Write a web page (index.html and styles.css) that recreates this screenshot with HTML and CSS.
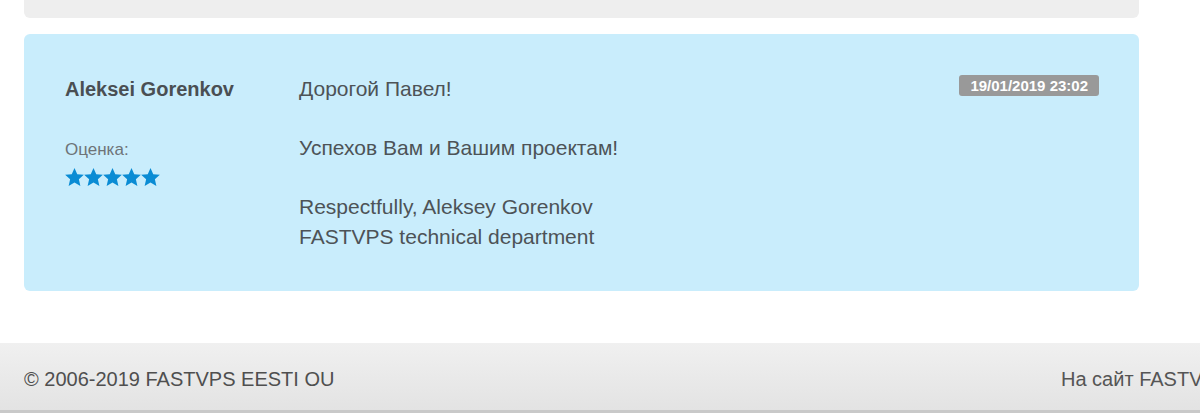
FILE: index.html
```html
<!DOCTYPE html>
<html lang="ru">
<head>
<meta charset="utf-8">
<title>Ticket</title>
<link rel="stylesheet" href="styles.css">
</head>
<body>
<div class="page">
  <div class="card card-prev"></div>
  <div class="card card-reply">
    <div class="author">
      <div class="author-name">Aleksei Gorenkov</div>
      <div class="rating-label">Оценка:</div>
      <div class="stars">
        <svg viewBox="1.4 1.4 21.2 20.2" class="star"><path d="M12 1.5l3.1 6.9 7.4.7-5.6 5 1.7 7.4L12 17.7l-6.6 3.8 1.7-7.4-5.6-5 7.4-.7z"/></svg>
        <svg viewBox="1.4 1.4 21.2 20.2" class="star"><path d="M12 1.5l3.1 6.9 7.4.7-5.6 5 1.7 7.4L12 17.7l-6.6 3.8 1.7-7.4-5.6-5 7.4-.7z"/></svg>
        <svg viewBox="1.4 1.4 21.2 20.2" class="star"><path d="M12 1.5l3.1 6.9 7.4.7-5.6 5 1.7 7.4L12 17.7l-6.6 3.8 1.7-7.4-5.6-5 7.4-.7z"/></svg>
        <svg viewBox="1.4 1.4 21.2 20.2" class="star"><path d="M12 1.5l3.1 6.9 7.4.7-5.6 5 1.7 7.4L12 17.7l-6.6 3.8 1.7-7.4-5.6-5 7.4-.7z"/></svg>
        <svg viewBox="1.4 1.4 21.2 20.2" class="star"><path d="M12 1.5l3.1 6.9 7.4.7-5.6 5 1.7 7.4L12 17.7l-6.6 3.8 1.7-7.4-5.6-5 7.4-.7z"/></svg>
      </div>
    </div>
    <div class="message">
      <p>Дорогой Павел!</p>
      <p>Успехов Вам и Вашим проектам!</p>
      <p class="sign">Respectfully, Aleksey Gorenkov<br>FASTVPS technical department</p>
    </div>
    <div class="meta">
      <span class="date">19/01/2019 23:02</span>
    </div>
  </div>
</div>
<footer class="footer">
  <div class="copy">© 2006-2019 FASTVPS EESTI OU</div>
  <a class="site-link" href="#">На сайт FASTVPS</a>
</footer>
</body>
</html>
```

FILE: styles.css
```css
html, body {
  margin: 0;
  padding: 0;
  background: #fff;
  overflow: hidden;
}
body {
  font-family: "Liberation Sans", Arial, sans-serif;
  color: #4d5357;
  width: 1200px;
  height: 415px;
}
.page {
  padding: 0 61px 0 24px;
  display: flex;
  flex-direction: column;
  gap: 16px;
  height: 343px;
}
.card {
  border-radius: 0 0 6px 6px;
}
.card-prev {
  height: 18px;
  background: #eeeeee;
}
.card-reply {
  border-radius: 6px;
  background: #c9edfc;
  display: flex;
  padding: 40px 40px 39px 41px;
}
.author {
  width: 234px;
  flex: none;
}
.author-name {
  font-weight: bold;
  font-size: 20px;
  line-height: 30px;
  color: #4a4f53;
}
.rating-label {
  margin-top: 36px;
  font-size: 17px;
  line-height: 20px;
  color: #6e7478;
}
.stars {
  display: flex;
  margin-top: 8px;
}
.star {
  width: 19px;
  height: 18px;
  fill: #0a8cd4;
}
.message {
  flex: 1;
  font-size: 21px;
  line-height: 30px;
}
.message p {
  margin: 0 0 29px;
}
.message p.sign {
  margin: 0;
}
.meta {
  flex: none;
  padding-top: 1px;
}
.date {
  display: inline-block;
  background: #999999;
  color: #fff;
  font-weight: bold;
  font-size: 15px;
  line-height: 21px;
  padding: 0 11px;
  border-radius: 3px;
}
.footer {
  width: 1260px;
  height: 62px;
  background: linear-gradient(#f0f0f0, #e3e3e3);
  border-bottom: 3px solid #c9c9c9;
  display: flex;
  justify-content: space-between;
  align-items: center;
  padding: 5px 0 0 24px;
  font-size: 20px;
  color: #4f4f4f;
  box-sizing: content-box;
}
.site-link {
  color: #555;
  text-decoration: none;
  width: 223px;
  white-space: nowrap;
}
```
